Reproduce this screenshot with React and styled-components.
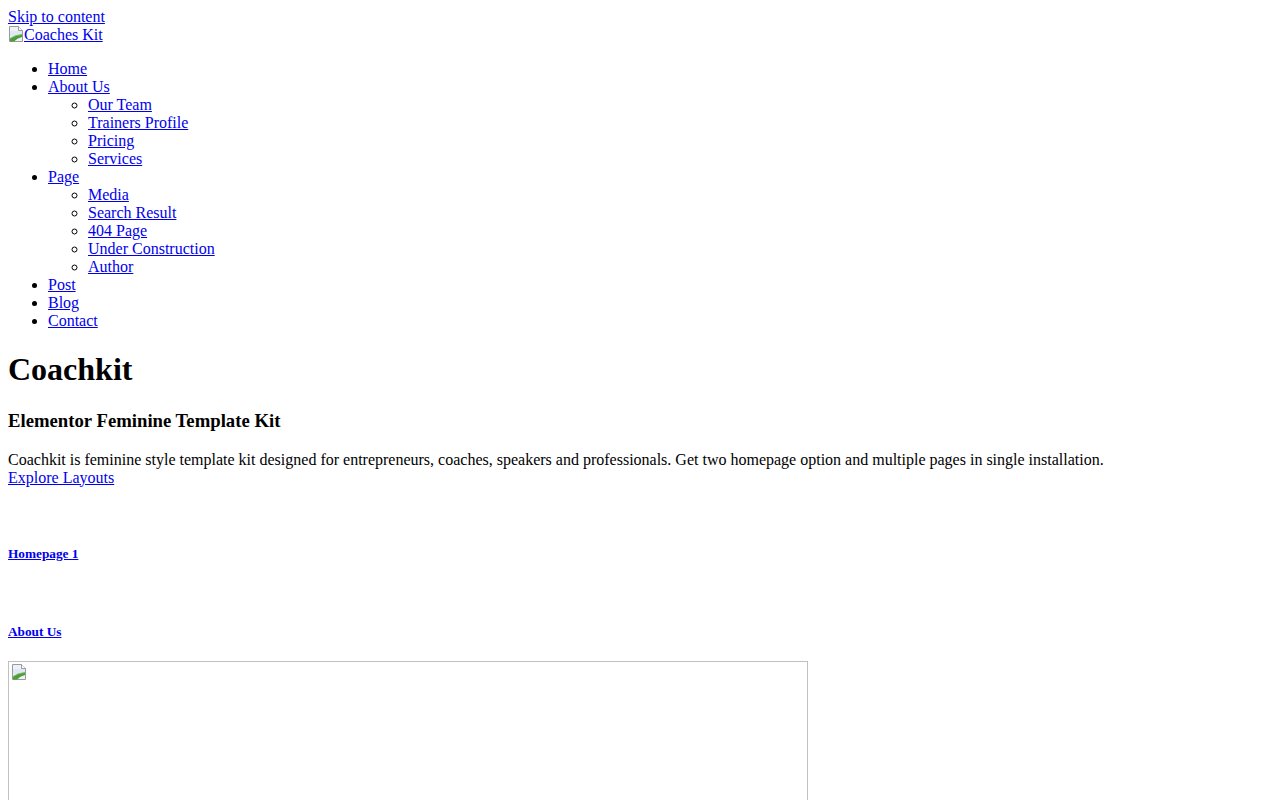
import React from "react";
import styled, { createGlobalStyle } from "styled-components";

const GlobalStyle = createGlobalStyle`
  html, body { background: #fff; }
  body {
    margin: 8px;
    font-family: "Liberation Serif", "Times New Roman", serif;
    font-size: 16px;
    line-height: normal;
    color: #000;
  }
`;

const Page = styled.div`
  display: block;
`;

const Link = styled.a`
  color: #0000ee;
  text-decoration: underline;
  cursor: pointer;
`;

const BlockLine = styled.div`
  display: block;
  height: 18px;
`;

const IconWrap = styled.span`
  display: inline-block;
  width: 16px;
  height: 16px;
  vertical-align: -2px;
  svg { display: block; }
`;

const NavList = styled.ul`
  margin: ${(p) => (p.$nested ? "0" : "16px 0")};
  padding-left: 40px;
  list-style-type: ${(p) => (p.$nested ? "circle" : "disc")};
`;

const NavItem = styled.li`
  display: list-item;
`;

const Title = styled.h1`
  font-size: 32px;
  font-weight: bold;
  margin: 21.44px 0;
`;

const Subtitle = styled.h3`
  font-size: 18.72px;
  font-weight: bold;
  margin: 18.72px 0;
`;

const Lead = styled.p`
  margin: 16px 0 0;
`;

const CtaRow = styled.div`
  margin-bottom: 19px;
`;

const LayoutCard = styled.div`
  display: block;
`;

const Thumb = styled.div`
  height: 18px;
`;

const CardTitle = styled.h5`
  font-size: 13.28px;
  line-height: 15px;
  font-weight: bold;
  margin: 22.5px 0 ${(p) => (p.$last ? "21.5px" : "22.5px")};
`;

const ImageFrame = styled.div`
  width: 800px;
  height: 400px;
  border: 1px solid #c0c0c0;
  padding: 2px 0 0 2px;
  box-sizing: border-box;
`;

const BrokenIcon = () => (
  <svg width="16" height="16" viewBox="0 0 16 16" aria-hidden="true">
    <path d="M1.5 0.5 H10.5 L14.5 4.5 V15.5 H1.5 Z" fill="#eef1f6" stroke="#9a9a9a" />
    <path d="M10.5 0.5 V4.5 H14.5" fill="#ffffff" stroke="#9a9a9a" />
    <rect x="2" y="5" width="12" height="5" fill="#dfe8f4" />
    <path d="M2 15.5 V12.5 Q7 9 14 8.5 V11 Q9 12 6 15.5 Z" fill="#4f9d3a" />
    <path d="M2 12.5 Q7 9 14 8.5" fill="none" stroke="#7cc063" strokeWidth="1" />
  </svg>
);

const nav = [
  { label: "Home" },
  {
    label: "About Us",
    children: ["Our Team", "Trainers Profile", "Pricing", "Services"],
  },
  {
    label: "Page",
    children: ["Media", "Search Result", "404 Page", "Under Construction", "Author"],
  },
  { label: "Post" },
  { label: "Blog" },
  { label: "Contact" },
];

const layouts = ["Homepage 1", "About Us"];

export default function App() {
  return (
    <Page>
      <GlobalStyle />
      <BlockLine>
        <Link href="#content">Skip to content</Link>
      </BlockLine>
      <BlockLine>
        <Link href="#">
          <IconWrap>
            <BrokenIcon />
          </IconWrap>
          Coaches Kit
        </Link>
      </BlockLine>
      <NavList>
        {nav.map((item) => (
          <NavItem key={item.label}>
            <Link href="#">{item.label}</Link>
            {item.children && (
              <NavList $nested>
                {item.children.map((c) => (
                  <NavItem key={c}>
                    <Link href="#">{c}</Link>
                  </NavItem>
                ))}
              </NavList>
            )}
          </NavItem>
        ))}
      </NavList>
      <Title>Coachkit</Title>
      <Subtitle>Elementor Feminine Template Kit</Subtitle>
      <Lead>
        Coachkit is feminine style template kit designed for entrepreneurs, coaches, speakers and
        professionals. Get two homepage option and multiple pages in single installation.
      </Lead>
      <CtaRow>
        <Link href="#">Explore Layouts</Link>
      </CtaRow>
      {layouts.map((l, i) => (
        <LayoutCard key={l}>
          <Thumb />
          <CardTitle $last={i === layouts.length - 1}>
            <Link href="#">{l}</Link>
          </CardTitle>
        </LayoutCard>
      ))}
      <ImageFrame>
        <BrokenIcon />
      </ImageFrame>
    </Page>
  );
}
